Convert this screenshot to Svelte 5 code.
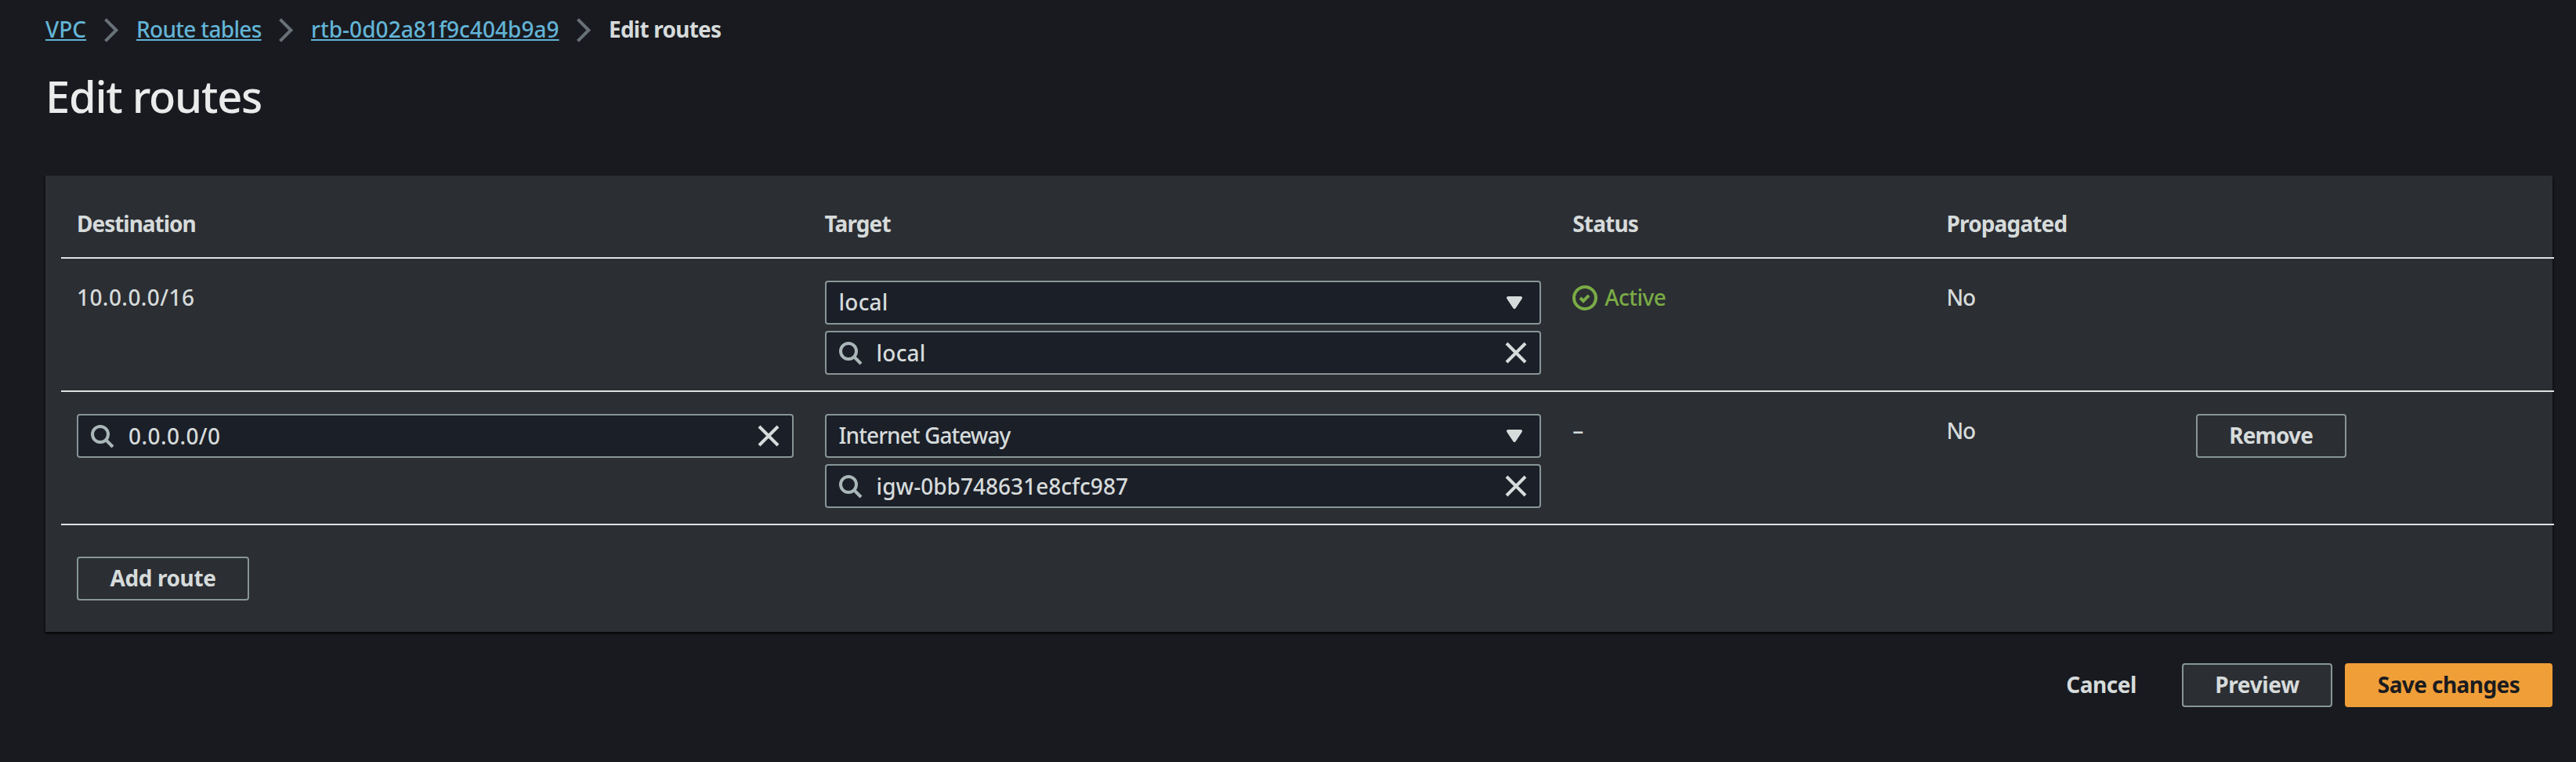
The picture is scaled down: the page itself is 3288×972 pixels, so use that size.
<script>
  const crumbs = [
    { label: 'VPC', kind: 'service' },
    { label: 'Route tables', kind: 'section' },
    { label: 'rtb-0d02a81f9c404b9a9', kind: 'resource' }
  ];

  const columns = ['Destination', 'Target', 'Status', 'Propagated'];

  let routes = $state([
    { destination: '10.0.0.0/16', fixed: true, type: 'local', target: 'local', status: 'Active', propagated: 'No' },
    { destination: '0.0.0.0/0', fixed: false, type: 'Internet Gateway', target: 'igw-0bb748631e8cfc987', status: '–', propagated: 'No' }
  ]);
</script>

{#snippet searchField(value, kind)}
  <div class="field">
    <svg class="icon search" viewBox="0 0 16 16"><circle cx="7" cy="7" r="5" /><path d="m15 15-4.5-4.5" /></svg>
    <span class="value {kind}">{value}</span>
    <svg class="icon" viewBox="0 0 16 16"><path d="m2 2 12 12M14 2 2 14" /></svg>
  </div>
{/snippet}

<main>
  <nav>
    {#each crumbs as crumb}
      <a class={crumb.kind} href="#top">{crumb.label}</a>
      <svg class="chevron" viewBox="0 0 18 31"><path d="M1.5 1.7 15.3 15.5 1.5 29.3" /></svg>
    {/each}
    <span class="current">Edit routes</span>
  </nav>

  <h1>Edit routes</h1>

  <section class="panel">
    <div class="table">
      <div class="row head">
        {#each columns as column}
          <div class="cell {column.toLowerCase()}">{column}</div>
        {/each}
      </div>
      {#each routes as route}
        <div class="row">
          <div class="cell">
            {#if route.fixed}
              <span class="text cidr">{route.destination}</span>
            {:else}
              {@render searchField(route.destination, 'cidr')}
            {/if}
          </div>
          <div class="cell target-cell">
            <div class="field select">
              <span class="value" class:phrase={route.type !== 'local'} class:word={route.type === 'local'}>{route.type}</span>
              <svg class="icon caret" viewBox="0 0 16 16"><path d="M4 5h8l-4 6-4-6z" /></svg>
            </div>
            {@render searchField(route.target, route.target === 'local' ? 'word' : 'id')}
          </div>
          <div class="cell">
            {#if route.status === 'Active'}
              <span class="text active">
                <svg class="icon" viewBox="0 0 16 16"><circle cx="8" cy="8" r="7" /><path d="m5 8 2 2 3.521-3.521" /></svg>
                <span>{route.status}</span>
              </span>
            {:else}
              <span class="text">{route.status}</span>
            {/if}
          </div>
          <div class="cell"><span class="text no">{route.propagated}</span></div>
          <div class="cell">
            {#if !route.fixed}<button class="remove">Remove</button>{/if}
          </div>
        </div>
      {/each}
    </div>
    <button class="add">Add route</button>
  </section>

  <footer>
    <button class="cancel">Cancel</button>
    <button class="preview">Preview</button>
    <button class="primary">Save changes</button>
  </footer>
</main>

<style>
  :global(body) {
    background: #191a1f;
  }

  main {
    box-sizing: border-box;
    height: 972px;
    padding: 17px 30px 0 58px;
    overflow: hidden;
    background: #191a1f;
    color: #d6dbdb;
    font: 500 28px/40px "Noto Sans", "Open Sans", sans-serif;
  }

  nav {
    display: flex;
    height: 40px;
  }

  a {
    color: #62b4d6;
    text-decoration: underline;
    text-decoration-thickness: 2px;
    text-underline-offset: 2px;
    white-space: nowrap;
  }

  .service { width: 52px; letter-spacing: 0; }
  .section { width: 159px; letter-spacing: -0.68px; }
  .resource { width: 316px; letter-spacing: 0.05px; }

  .chevron {
    width: 18px;
    height: 31px;
    margin: 6px 23px 0;
    fill: none;
    stroke: #687078;
    stroke-width: 4;
  }

  .current {
    font-weight: 700;
    letter-spacing: -0.77px;
  }

  h1 {
    margin: 29px 0 66px;
    color: #eaecec;
    font-size: 56px;
    font-weight: 500;
    line-height: 72px;
    letter-spacing: -1.25px;
  }

  .panel {
    box-sizing: border-box;
    height: 582px;
    padding: 0 0 0 20px;
    background: #2b2e33;
    box-shadow: 0 2px 2px rgba(0, 0, 0, 0.5), 2px 2px 2px rgba(0, 0, 0, 0.25), -2px 2px 2px rgba(0, 0, 0, 0.25);
  }

  .table {
    width: 3182px;
  }

  .row {
    display: grid;
    grid-template-columns: 30% 30% 15% 10% 15%;
    box-sizing: border-box;
    height: 170px;
    border-bottom: 2px solid #dfe1e3;
  }

  .cell {
    padding: 28px 20px 0;
  }

  .head {
    height: 106px;
    font-weight: 700;
  }

  .head .cell {
    padding-top: 41px;
  }

  .destination { letter-spacing: -1.02px; }
  .target { letter-spacing: -0.9px; }
  .status { letter-spacing: -0.82px; }
  .propagated { letter-spacing: -0.85px; }

  .text {
    display: block;
    margin-top: 1px;
  }

  .active {
    display: flex;
    gap: 9px;
    color: #7aab45;
    letter-spacing: -0.5px;
  }

  .no { letter-spacing: -1.3px; }
  .cidr { letter-spacing: 0.42px; }
  .word { letter-spacing: 0.2px; }
  .id { letter-spacing: 0.02px; }
  .phrase { letter-spacing: -0.93px; }

  .target-cell {
    display: flex;
    flex-direction: column;
    gap: 8px;
  }

  .field {
    display: flex;
    align-items: center;
    box-sizing: border-box;
    height: 56px;
    padding: 0 14px;
    border: 2px solid #879596;
    border-radius: 4px;
    background: #1b1f28;
  }

  .value {
    flex: 1;
    padding-left: 18px;
    line-height: 52px;
    white-space: nowrap;
  }

  .select {
    padding: 0 16px;
  }

  .select .value {
    padding: 0 0 2px;
    line-height: 50px;
  }

  .icon {
    flex: none;
    width: 32px;
    height: 32px;
    fill: none;
    stroke: currentColor;
    stroke-width: 2;
  }

  .active .icon {
    margin-top: 5px;
  }

  .search {
    color: #aab7b8;
  }

  .caret {
    fill: currentColor;
    stroke-linejoin: round;
  }

  button {
    display: block;
    box-sizing: border-box;
    height: 56px;
    padding: 0 0 2px;
    border: 2px solid #879596;
    border-radius: 4px;
    background: #2b2e33;
    color: #d6dbdb;
    font: 700 28px/50px "Noto Sans", "Open Sans", sans-serif;
    white-space: nowrap;
  }

  .remove { width: 192px; letter-spacing: -0.86px; }
  .add { width: 220px; margin: 40px 0 0 20px; letter-spacing: -0.39px; }

  footer {
    display: flex;
    justify-content: flex-end;
    margin-top: 40px;
  }

  .cancel {
    width: 172px;
    margin-right: 17px;
    border-color: transparent;
    background: transparent;
    letter-spacing: -0.46px;
  }

  .preview { width: 192px; margin-right: 16px; letter-spacing: -0.34px; }

  .primary {
    width: 265px;
    border-color: #f09e38;
    background: #f09e38;
    color: #1a1b1f;
    letter-spacing: -0.57px;
  }
</style>
